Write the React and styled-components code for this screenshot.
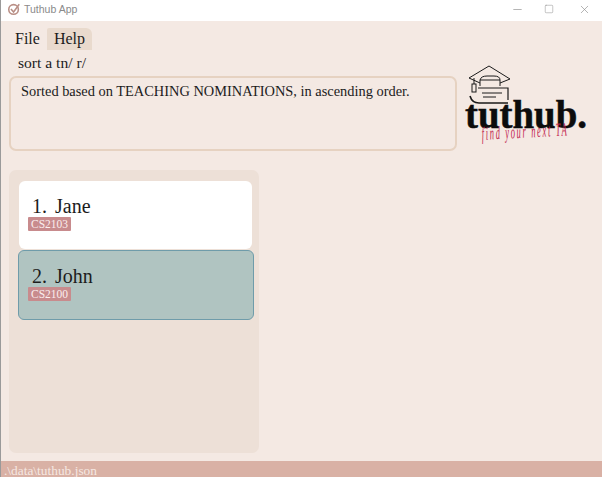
import styled, { createGlobalStyle } from 'styled-components';
import { Minus, Square, X } from 'lucide-react';

const Global = createGlobalStyle`
  html, body {
    margin: 0;
    padding: 0;
    background: #f4e9e3;
  }
  * {
    box-sizing: border-box;
  }
`

const Window = styled.div`
  width: 602px;
  height: 477px;
  display: flex;
  flex-direction: column;
  overflow: hidden;
  background: #f4e9e3;
  border-left: 1px solid #9a9a9a;
  font-family: "Liberation Serif", Georgia, serif;
  color: #1c1c1c;
`
const TitleBar = styled.div`
  height: 21px;
  flex: none;
  display: flex;
  align-items: center;
  background: #fff;
  padding: 0 0 3px 6px;
  font-family: "Liberation Sans", sans-serif;
  font-size: 10.5px;
  color: #8a8a8a;
`
const TitleText = styled.span`
  margin-left: 3px;
`
const WinButtons = styled.div`
  margin-left: auto;
  display: flex;
  align-items: center;
  gap: 20px;
  padding-right: 11px;
  color: #8c8c8c;
  svg:last-child {
    margin-left: 4px;
  }
`
const MenuBar = styled.div`
  height: 29px;
  flex: none;
  display: flex;
  align-items: flex-end;
  padding-left: 7px;
`
const MenuItem = styled.div`
  height: 22px;
  padding: 0 7px;
  display: flex;
  align-items: center;
  font-size: 16px;
  border-radius: ${p => (p.$active ? '2px 6px 0 0' : '0')};
  background: ${p => (p.$active ? '#e9dacd' : 'transparent')};
`
const Command = styled.div`
  height: 26px;
  flex: none;
  padding-left: 17px;
  display: flex;
  align-items: center;
  font-size: 15.6px;
`
const TopRow = styled.div`
  flex: none;
  height: 75px;
  display: flex;
  padding-left: 8px;
`
const ResultBox = styled.div`
  width: 448px;
  height: 75px;
  padding: 3px 10px;
  font-size: 14.4px;
  line-height: 20px;
  border: 2px solid #e6d2c1;
  border-radius: 7px;
  background: #f4e9e3;
`
const LogoWrap = styled.div`
  width: 130px;
  height: 92px;
  margin-top: -12px;
  margin-left: 6px;
`
const Main = styled.div`
  flex: 1;
  padding: 19px 0 8px 8px;
  min-height: 0;
`
const ListPanel = styled.div`
  width: 250px;
  height: 100%;
  padding: 11px 10px;
  border-radius: 7px;
  background: #ede0d7;
  display: flex;
  flex-direction: column;
  align-items: flex-start;
`
const Card = styled.div`
  flex: none;
  height: ${p => (p.$selected ? '70px' : '68px')};
  margin: ${p => (p.$selected ? '0 0 0 -1px' : '0 0 1px 0')};
  width: ${p => (p.$selected ? '236px' : '233px')};
  padding: 15px 0 0 9px;
  border-radius: 6px;
  background: ${p => (p.$selected ? '#b0c4c1' : '#fff')};
  border: ${p => (p.$selected ? '1px solid #6f9caa' : 'none')};
`
const Name = styled.div`
  padding-left: 4px;
  font-size: 20px;
  line-height: 21px;
  word-spacing: 3px;
`
const Tag = styled.div`
  width: fit-content;
  height: 14px;
  padding: 0 3px;
  font-size: 11.5px;
  line-height: 14px;
  color: #fbeeee;
  background: #c88b8d;
  border-radius: 1px;
`
const StatusBar = styled.div`
  height: 16px;
  flex: none;
  padding-left: 3px;
  font-size: 13.4px;
  line-height: 19px;
  color: #f6e8e2;
  background: #d9b1a5;
  overflow: hidden;
`
const LogoWord = styled.text`
  font-family: "Liberation Serif", serif;
  font-weight: 700;
  font-size: 39px;
  fill: #0c0c0c;
  stroke: #0c0c0c;
  stroke-width: 0.5px;
`
const LogoScript = styled.text`
  font-family: "Liberation Serif", serif;
  font-style: italic;
  font-size: 8.5px;
  fill: #c2244f;
`

function AppIcon() {
  return (
    <svg width="14" height="14" viewBox="0 0 16 16" fill="none" stroke="#b98f86" strokeWidth="1.8">
      <circle cx="7.5" cy="8.5" r="5.5" />
      <path d="M4.5 8 L7.5 11.5 L14 2.5" />
    </svg>
  )
}

function Logo() {
  return (
    <svg width="130" height="92" viewBox="0 0 130 92" style={{ overflow: 'visible' }}>
      <g fill="none" stroke="#1a1a1a" strokeWidth="1">
        <path d="M17 19 L6 14 L26 2 L47 15 L37 19" />
        <path d="M17 22 V16 Q18 12 24 12 H31 Q37 12 37 16 V22" />
        <path d="M17 16 H37" />
        <path d="M15 24 H45 V36" strokeWidth="1.2" />
        <path d="M19 29 H39 M20 33 H33" />
        <path d="M7 32 Q9 39 16 39 H45" strokeWidth="1.6" />
        <path d="M11 14 V20" />
        <rect x="9" y="20" width="4" height="8" />
      </g>
      <LogoWord x="2" y="64" textLength="122" lengthAdjust="spacingAndGlyphs">tuthub.</LogoWord>
      <LogoScript textLength="85" lengthAdjust="spacing" transform="translate(19 76) rotate(-3) scale(1 2.2)">find your next TA</LogoScript>
    </svg>
  )
}

export default function App() {
  return (
    <Window>
      <Global />
      <TitleBar>
        <AppIcon />
        <TitleText>Tuthub App</TitleText>
        <WinButtons>
          <Minus size={13} strokeWidth={1.2} />
          <Square size={10} strokeWidth={1.2} />
          <X size={13} strokeWidth={1.2} />
        </WinButtons>
      </TitleBar>
      <MenuBar>
        <MenuItem>File</MenuItem>
        <MenuItem $active>Help</MenuItem>
      </MenuBar>
      <Command>sort a tn/ r/</Command>
      <TopRow>
        <ResultBox>Sorted based on TEACHING NOMINATIONS, in ascending order.</ResultBox>
        <LogoWrap>
          <Logo />
        </LogoWrap>
      </TopRow>
      <Main>
        <ListPanel>
          <Card>
            <Name>1. Jane</Name>
            <Tag>CS2103</Tag>
          </Card>
          <Card $selected>
            <Name>2. John</Name>
            <Tag>CS2100</Tag>
          </Card>
        </ListPanel>
      </Main>
      <StatusBar>.\data\tuthub.json</StatusBar>
    </Window>
  )
}
